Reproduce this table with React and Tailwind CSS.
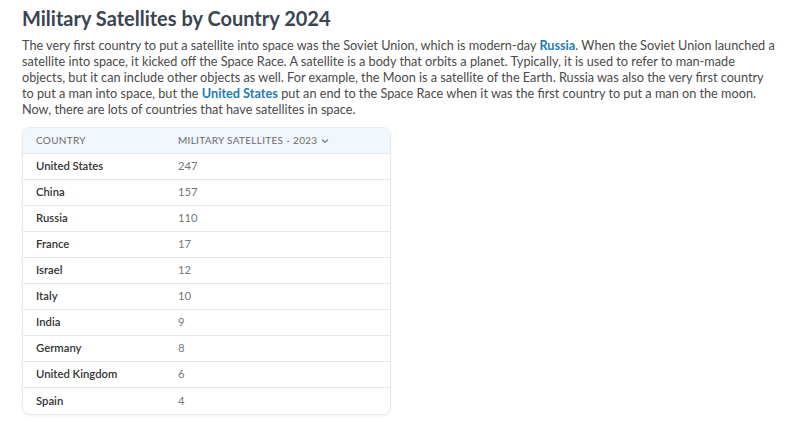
import React from 'react';

const rows = [
  ['United States', 247],
  ['China', 157],
  ['Russia', 110],
  ['France', 17],
  ['Israel', 12],
  ['Italy', 10],
  ['India', 9],
  ['Germany', 8],
  ['United Kingdom', 6],
  ['Spain', 4],
];

const Link = ({ children }) => <span className="font-bold text-[#1f7cb0]">{children}</span>;

const App = () => {
  return (
    <div className="bg-white w-[800px] h-[422px] overflow-hidden px-[22px] pt-[4px] font-['Lato',sans-serif]">
      <h1 className="text-[20px] font-bold text-[#3a4452] leading-[28px]">Military Satellites by Country 2024</h1>
      <p className="mt-[5px] text-[12.7px] leading-[16px] text-[#4a4a4a] whitespace-nowrap">
        The very first country to put a satellite into space was the Soviet Union, which is modern-day <Link>Russia</Link>. When the Soviet Union launched a
        <br />
        satellite into space, it kicked off the Space Race. A satellite is a body that orbits a planet. Typically, it is used to refer to man-made
        <br />
        objects, but it can include other objects as well. For example, the Moon is a satellite of the Earth. Russia was also the very first country
        <br />
        to put a man into space, but the <Link>United States</Link> put an end to the Space Race when it was the first country to put a man on the moon.
        <br />
        Now, there are lots of countries that have satellites in space.
      </p>
      <div className="mt-[10px] w-[369px] rounded-lg border border-[#e6ebef] shadow-[0_1px_3px_rgba(0,0,0,0.06)] overflow-hidden">
        <div className="flex items-center h-[26px] bg-[#f1f7fc] border-b border-[#e3e8ec] text-[10px] tracking-[0.3px] text-[#6b6b6b]">
          <div className="w-[155px] pl-[13px]">COUNTRY</div>
          <div className="flex items-center gap-1">
            MILITARY SATELLITES - 2023
            <svg width="8" height="6" viewBox="0 0 8 6" fill="none" stroke="#777" strokeWidth="1.2">
              <path d="M1 1.5 L4 4.5 L7 1.5" />
            </svg>
          </div>
        </div>
        {rows.map(([name, val], i) => (
          <div
            key={name}
            className={`flex items-center h-[26px] text-[11.3px] ${i < rows.length - 1 ? 'border-b border-[#e6e9ec]' : ''}`}
          >
            <div className="w-[155px] pl-[13px] font-semibold text-[#333]">{name}</div>
            <div className="text-[#777]">{val}</div>
          </div>
        ))}
      </div>
    </div>
  );
};

export default App;
